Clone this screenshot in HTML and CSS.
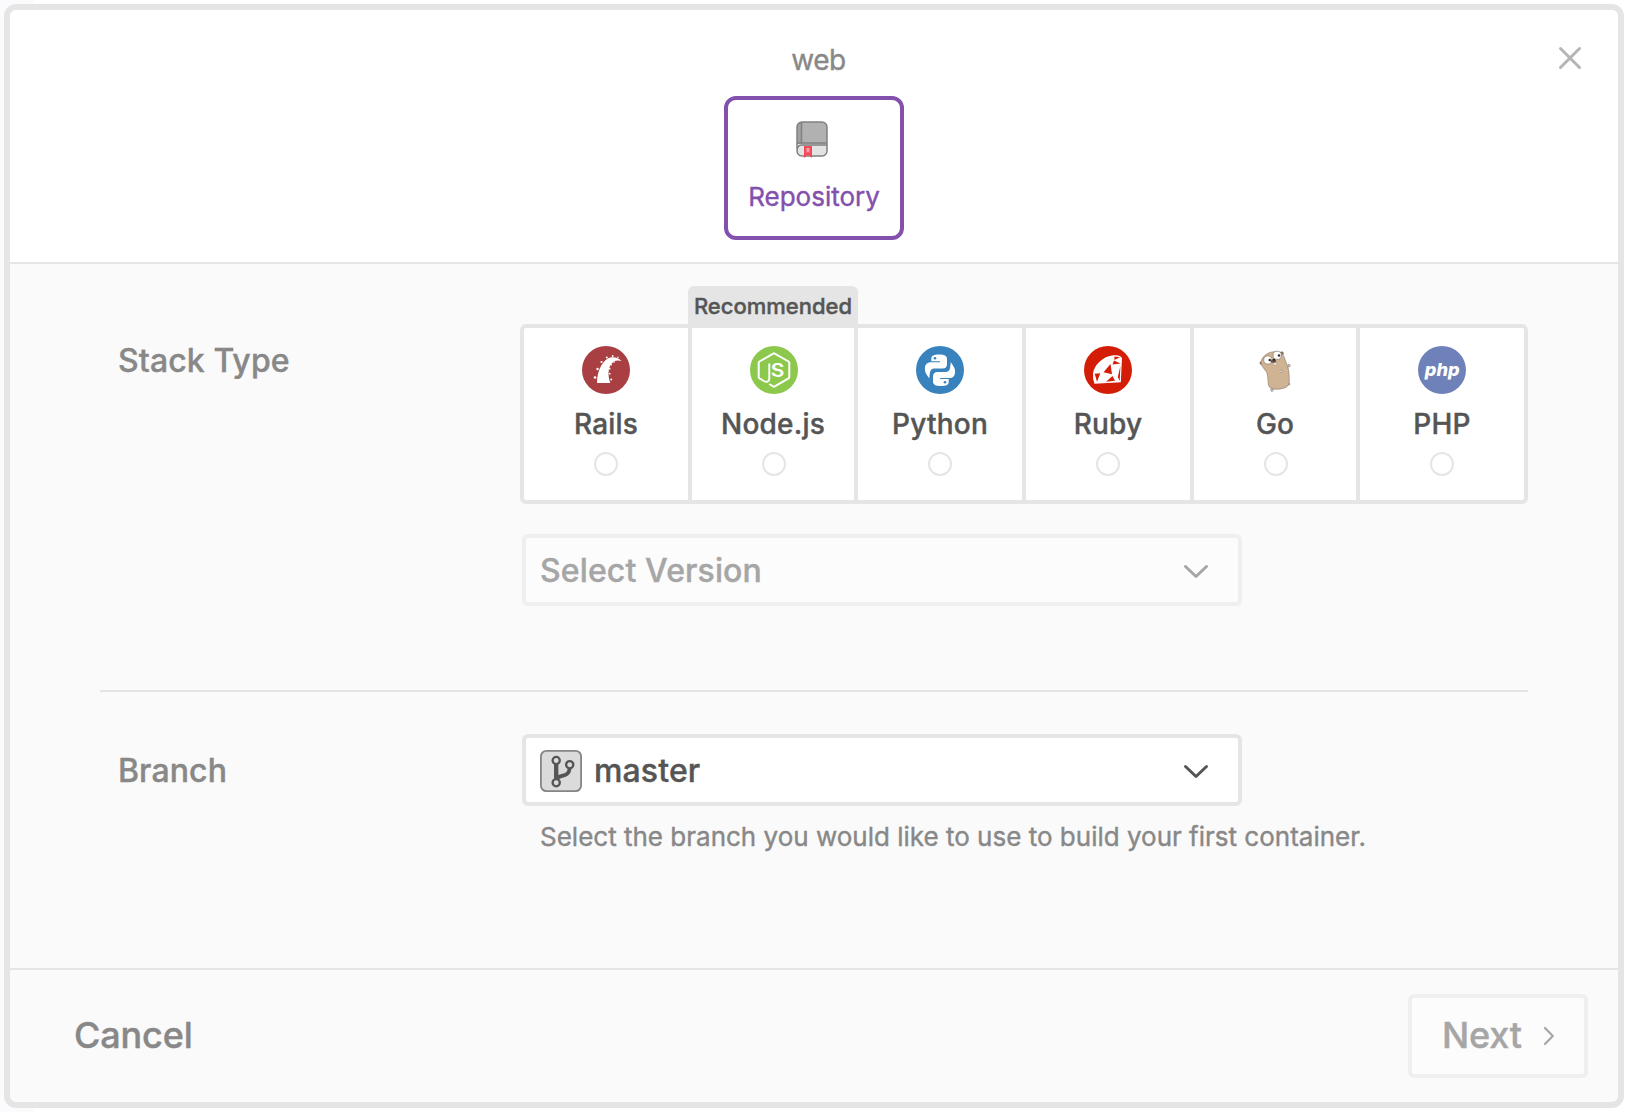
FILE: index.html
```html
<!DOCTYPE html>
<html lang="en">
<head>
<meta charset="utf-8">
<title>web – Repository</title>
<link rel="stylesheet" href="styles.css">
</head>
<body>
<main class="modal">
  <header class="modal-header">
    <h1 class="service-name">web</h1>
    <button class="close" aria-label="Close">
      <svg width="24" height="24" viewBox="0 0 24 24"><path d="M2.500 2.500l19 19M21.500 2.500l-19 19"/></svg>
    </button>
    <div class="tab">
      <svg class="book" width="32" height="37" viewBox="0 0 32 37">
        <path d="M1 6a5 5 0 0 1 5-5h20a5 5 0 0 1 5 5v24a5 5 0 0 1-5 5H6a5 5 0 0 1-5-5z" fill="#e3e3e3"/>
        <path d="M1 6a5 5 0 0 1 5-5h20a5 5 0 0 1 5 5v17H1z" fill="#b1b1b1"/>
        <path d="M1 6a5 5 0 0 1 5-5v22H1z" fill="#a2a2a2"/>
        <path d="M1 28V6a5 5 0 0 1 5-5h20a5 5 0 0 1 5 5v24a5 5 0 0 1-5 5H6a5 5 0 0 1-5-5c0-4 1.500-6 5-6h25M5.500 1.500V22M1 22h30" fill="none" stroke="#808080" stroke-width="1.500"/>
        <path d="M8 25h8v12l-4-3-4 3z" fill="#f24c5c"/>
        <path d="M10.500 27h3v5l-1.500-1.500-1.500 1.500z" fill="#f8a0a8"/>
      </svg>
      <span>Repository</span>
    </div>
  </header>

  <section class="modal-body">
    <div class="row row-stack">
      <h2 class="label">Stack Type</h2>
      <div class="control">
        <div class="stacks">
          <label class="stack">
            <svg width="48" height="48" viewBox="0 0 48 48">
              <circle cx="24" cy="24" r="24" fill="#a93f42"/>
              <g fill="#fff">
                <path d="M15 36.900C15 27 19 16.500 25.500 12.800C30.500 10 36 11.300 39.600 15C34.500 13.400 30.500 15.500 28.300 19.500C25.700 24.500 26.200 31 28.300 36.900z"/>
                <circle cx="13" cy="31.500" r="1.300"/><circle cx="15.500" cy="23" r="1.200"/><circle cx="19.500" cy="16" r="1.100"/>
                <circle cx="24.800" cy="11.600" r="1"/><circle cx="30.700" cy="10" r=".9"/><circle cx="36" cy="11.300" r=".7"/>
                <circle cx="32" cy="16" r=".8"/><circle cx="29.300" cy="18.700" r=".8"/><circle cx="27.700" cy="22.700" r=".9"/>
                <circle cx="27.700" cy="27.700" r=".9"/><circle cx="29.200" cy="33.500" r="1"/>
              </g>
            </svg>
            <span class="stack-name">Rails</span>
            <input class="radio" type="radio" name="stack">
          </label>
          <label class="stack stack-narrow">
            <span class="badge">Recommended</span>
            <svg width="48" height="48" viewBox="0 0 48 48">
              <circle cx="24" cy="24" r="24" fill="#8cc84b"/>
              <path d="M19.300 17.600v14.900c0 3.400-2.800 4-5.400 2.500l-4.400-2.600q-.8-.5-.8-1.400V16.800q0-.8.800-1.300L23.200 7.600q.8-.5 1.600 0l13.700 7.900q.8.500.8 1.300V31q0 .9-.8 1.400l-13.700 8q-.8.500-1.600 0l-4-2.400" fill="none" stroke="#fff" stroke-width="2"/>
              <text class="node-mark" x="20.700" y="31.200" textLength="13.600" lengthAdjust="spacingAndGlyphs">S</text>
            </svg>
            <span class="stack-name">Node.js</span>
            <input class="radio" type="radio" name="stack">
          </label>
          <label class="stack">
            <svg width="48" height="48" viewBox="0 0 48 48">
              <circle cx="24" cy="24" r="24" fill="#3882bd"/>
              <g id="snake">
                <path fill="#fff" d="M15.300 15.300V12.500C15.300 9.500 18 8.500 23 8.500C28.500 8.500 31 9.800 31 13V18C31 21 29.500 22.500 26.500 22.500H19C15.500 22.500 14.200 24.500 13.900 27C13.600 29 13.400 30.500 13.200 32.500C11.500 29 8.900 27.500 8.900 23C8.900 18.500 11 16.300 15 16.300H24V15.300z"/>
                <circle cx="19" cy="12.200" r="1.300" fill="#3882bd"/>
              </g>
              <use href="#snake" transform="rotate(180 24 24.200)"/>
            </svg>
            <span class="stack-name">Python</span>
            <input class="radio" type="radio" name="stack">
          </label>
          <label class="stack">
            <svg width="48" height="48" viewBox="0 0 48 48">
              <circle cx="24" cy="24" r="24" fill="#d41d06"/>
              <path fill="#fff" d="M9 27.500C10 19 19 10.500 28 9.500C31 9 36 8.500 38 12L36.800 36.300L10.500 37.800Q8.500 33 9 27.500z"/>
              <g fill="#d41d06">
                <path d="M10.700 27.700L16.300 27.300L13 35.700z"/>
                <path d="M26.500 18L19.500 26.200L28 28.300z"/>
                <path d="M28.500 30L31 34.700L22 35.700z"/>
                <path d="M30.500 10.500L36 11.300L30.300 14z"/>
                <path d="M28.500 18.500L36.500 17.500L30 14.500z"/>
                <path d="M36.400 20L35.700 35L33.800 31z"/>
              </g>
            </svg>
            <span class="stack-name">Ruby</span>
            <input class="radio" type="radio" name="stack">
          </label>
          <label class="stack stack-narrow">
            <svg width="48" height="48" viewBox="0 0 48 48">
              <g stroke="#807468" stroke-width=".6">
                <path d="M18.500 43l1 2.500q1.500.3 2-2zM36 36.500l1.800 1q.5 1-.5 1.500l-2-1zM36 18.500l2 .2q.8 1-.2 2l-1.800.3z" fill="#e3d6c4"/>
                <circle cx="9.500" cy="17" r="1.600" fill="#8a6f55"/><circle cx="29.700" cy="7.500" r="1.800" fill="#8a6f55"/>
                <path d="M9 15.500C11 9 17 5.800 23 5.700C28 5.600 31.500 8 32.500 12C34 17 37 22 37 28C37 32 38 35 36.500 39C34 43.500 20.500 45 17 40.500C15.500 37 16.500 32 15 27C13 23.500 8.500 19.500 9 15.500z" fill="#cfb393"/>
                <circle cx="15.800" cy="14" r="4.100" fill="#fff"/><circle cx="25.200" cy="9.300" r="4.100" fill="#fff"/>
              </g>
              <circle cx="17.800" cy="14" r="1.300" fill="#333"/><circle cx="27" cy="9.500" r="1.300" fill="#333"/>
              <ellipse cx="21.500" cy="15.200" rx="2.800" ry="1.700" fill="#6c5540"/><ellipse cx="22" cy="13.700" rx="1.400" ry="1" fill="#222"/>
              <path d="M21.500 17l2.500-.3.300 2-1.900.3z" fill="#fff" stroke="#999" stroke-width=".4"/>
              <path d="M26.800 24.800q3-1.500 4 .4-.8 2-3.500 1.300" fill="#e3d6c4" stroke="#807468" stroke-width=".5"/>
            </svg>
            <span class="stack-name">Go</span>
            <input class="radio" type="radio" name="stack">
          </label>
          <label class="stack">
            <svg width="48" height="48" viewBox="0 0 48 48">
              <circle cx="24" cy="24" r="24" fill="#6f81b9"/>
              <text class="php-mark" x="6.800" y="29.500" textLength="34.800" lengthAdjust="spacingAndGlyphs">php</text>
            </svg>
            <span class="stack-name">PHP</span>
            <input class="radio" type="radio" name="stack">
          </label>
        </div>
        <div class="select select-disabled">
          <span>Select Version</span>
          <svg class="chevron" width="26" height="16" viewBox="0 0 26 16"><path d="M2.500 2.500L13 12.500L23.500 2.500"/></svg>
        </div>
      </div>
    </div>

    <div class="row row-branch">
      <h2 class="label">Branch</h2>
      <div class="control">
        <div class="select">
          <svg class="branch-icon" width="42" height="42" viewBox="0 0 42 42">
            <rect x=".9" y=".9" width="40.200" height="40.200" rx="5.500" fill="#dbdbdb" stroke="#858585" stroke-width="1.800"/>
            <g fill="none" stroke="#555">
              <path d="M16.200 14v14.500" stroke-width="4.400"/>
              <path d="M16.500 28.500C20 24 28.500 28 29.700 18.500" stroke-width="3.800"/>
              <g stroke-width="2.300" fill="#dbdbdb"><circle cx="16.200" cy="10.500" r="3.600"/><circle cx="16.200" cy="32.700" r="3.600"/><circle cx="29.700" cy="14.700" r="3.600"/></g>
            </g>
          </svg>
          <span>master</span>
          <svg class="chevron" width="26" height="16" viewBox="0 0 26 16"><path d="M2.500 2.500L13 12.500L23.500 2.500"/></svg>
        </div>
        <p class="help">Select the branch you would like to use to build your first container.</p>
      </div>
    </div>
  </section>

  <footer class="modal-footer">
    <button class="cancel">Cancel</button>
    <button class="next"><span>Next</span>
      <svg width="12" height="20" viewBox="0 0 12 20"><path d="M2 2l7.800 8L2 18"/></svg>
    </button>
  </footer>
</main>
</body>
</html>
```
FILE: styles.css
```css
* { box-sizing: border-box; }

body {
  margin: 0;
  height: 1112px;
  padding: 4px;
  background: linear-gradient(90deg, #fbfafd 34px, #fff 34px);
  font-family: Inter, "Liberation Sans", sans-serif;
  color: #555;
  -webkit-text-stroke: .4px;
}

h1, h2, p { margin: 0; }

button {
  padding: 0;
  border: 0;
  background: none;
  font: inherit;
  color: inherit;
}

svg { display: block; flex: none; }

.modal {
  display: flex;
  flex-direction: column;
  width: 1620px;
  height: 1104px;
  border: 6px solid #e5e5e5;
  border-radius: 12px;
  background: #fafafa;
  overflow: hidden;
}

.modal-header {
  position: relative;
  display: flex;
  flex-direction: column;
  align-items: center;
  height: 254px;
  padding-top: 33px;
  border-bottom: 2px solid #e5e5e5;
  background: #fff;
}

.service-name {
  margin: 0 0 19px 9px;
  font-size: 28px;
  font-weight: 400;
  line-height: 34px;
  letter-spacing: -.5px;
  color: #888;
}

.close {
  position: absolute;
  top: 36px;
  right: 36px;
}

.close path { fill: none; stroke: #b5b5b5; stroke-width: 3; stroke-linecap: round; }

.tab {
  display: flex;
  flex-direction: column;
  align-items: center;
  width: 180px;
  height: 144px;
  padding-top: 21px;
  border: 4px solid #8350ad;
  border-radius: 12px;
  font-size: 26px;
  line-height: 32px;
  color: #8350ad;
}

.book { margin: 0 4px 23px 0; }

.modal-body { flex: 1; padding: 0 90px; }

.row { display: grid; grid-template-columns: 420px 1fr; }
.row-stack { height: 428px; padding-top: 60px; border-bottom: 2px solid #e5e5e5; }
.row-branch { padding-top: 42px; }

.label {
  padding: 17px 0 0 18px;
  font-size: 32px;
  font-weight: 500;
  line-height: 40px;
  letter-spacing: .1px;
  color: #888;
}

.stacks {
  display: grid;
  grid-template-columns: 164px 162px 164px 164px 162px 164px;
  gap: 4px;
  width: 1008px;
  height: 180px;
  margin-bottom: 30px;
  border: 4px solid #e5e5e5;
  border-radius: 6px;
  background: #e5e5e5;
}

.stack {
  position: relative;
  display: flex;
  flex-direction: column;
  align-items: center;
  padding-top: 18px;
  background: #fff;
}

.stack-narrow { padding-left: 2px; }
.stack:first-child { border-radius: 2px 0 0 2px; }
.stack:last-child { border-radius: 0 2px 2px 0; }

.stack-name {
  margin: 13px 0 11px;
  font-size: 28px;
  font-weight: 500;
  line-height: 34px;
  letter-spacing: .2px;
}

.stack-narrow .stack-name { margin-left: -2px; }

.radio {
  appearance: none;
  width: 24px;
  height: 24px;
  margin: 0;
  border: 2px solid #e5e5e5;
  border-radius: 50%;
  background: #fff;
}

.badge {
  position: absolute;
  left: -4px;
  top: -42px;
  width: 170px;
  height: 42px;
  border-radius: 6px 6px 0 0;
  background: #e5e5e5;
  font-size: 22px;
  font-weight: 500;
  line-height: 40px;
  text-align: center;
}

.node-mark,
.php-mark { fill: #fff; -webkit-text-stroke: 0; }
.node-mark { font: 600 18px Inter, sans-serif; }
.php-mark { font: italic 800 18px Inter, sans-serif; }

.select {
  display: flex;
  align-items: center;
  gap: 12px;
  width: 720px;
  height: 72px;
  margin-left: 2px;
  padding: 0 29px 0 14px;
  border: 4px solid #e5e5e5;
  border-radius: 6px;
  background: #fff;
  font-size: 32px;
  font-weight: 500;
  letter-spacing: .12px;
}

.branch-icon { margin-top: 2px; }
.chevron { margin: 4px 0 0 auto; }
.chevron path { fill: none; stroke: #555; stroke-width: 3; stroke-linecap: round; stroke-linejoin: round; }
.select-disabled { border-color: #efefef; background: #fcfcfc; color: #a6a6a6; }
.select-disabled .chevron path { stroke: #a6a6a6; }

.help {
  margin: 15px 0 0 20px;
  font-size: 26px;
  line-height: 32px;
  color: #888;
  white-space: nowrap;
}

.modal-footer {
  display: flex;
  align-items: center;
  justify-content: space-between;
  height: 134px;
  padding: 0 30px 0 64px;
  border-top: 2px solid #e5e5e5;
  font-size: 36px;
  font-weight: 500;
  line-height: 44px;
}

.cancel { padding-bottom: 2px; letter-spacing: -.15px; color: #888; }

.next {
  display: flex;
  align-items: center;
  justify-content: space-between;
  width: 180px;
  height: 84px;
  padding: 0 29px 0 30px;
  border: 4px solid #efefef;
  border-radius: 6px;
  background: #fcfcfc;
  letter-spacing: -.2px;
  color: #a6a6a6;
}

.next span { padding-bottom: 2px; }
.next path { fill: none; stroke: #a6a6a6; stroke-width: 2.2; stroke-linecap: round; stroke-linejoin: round; }
```
